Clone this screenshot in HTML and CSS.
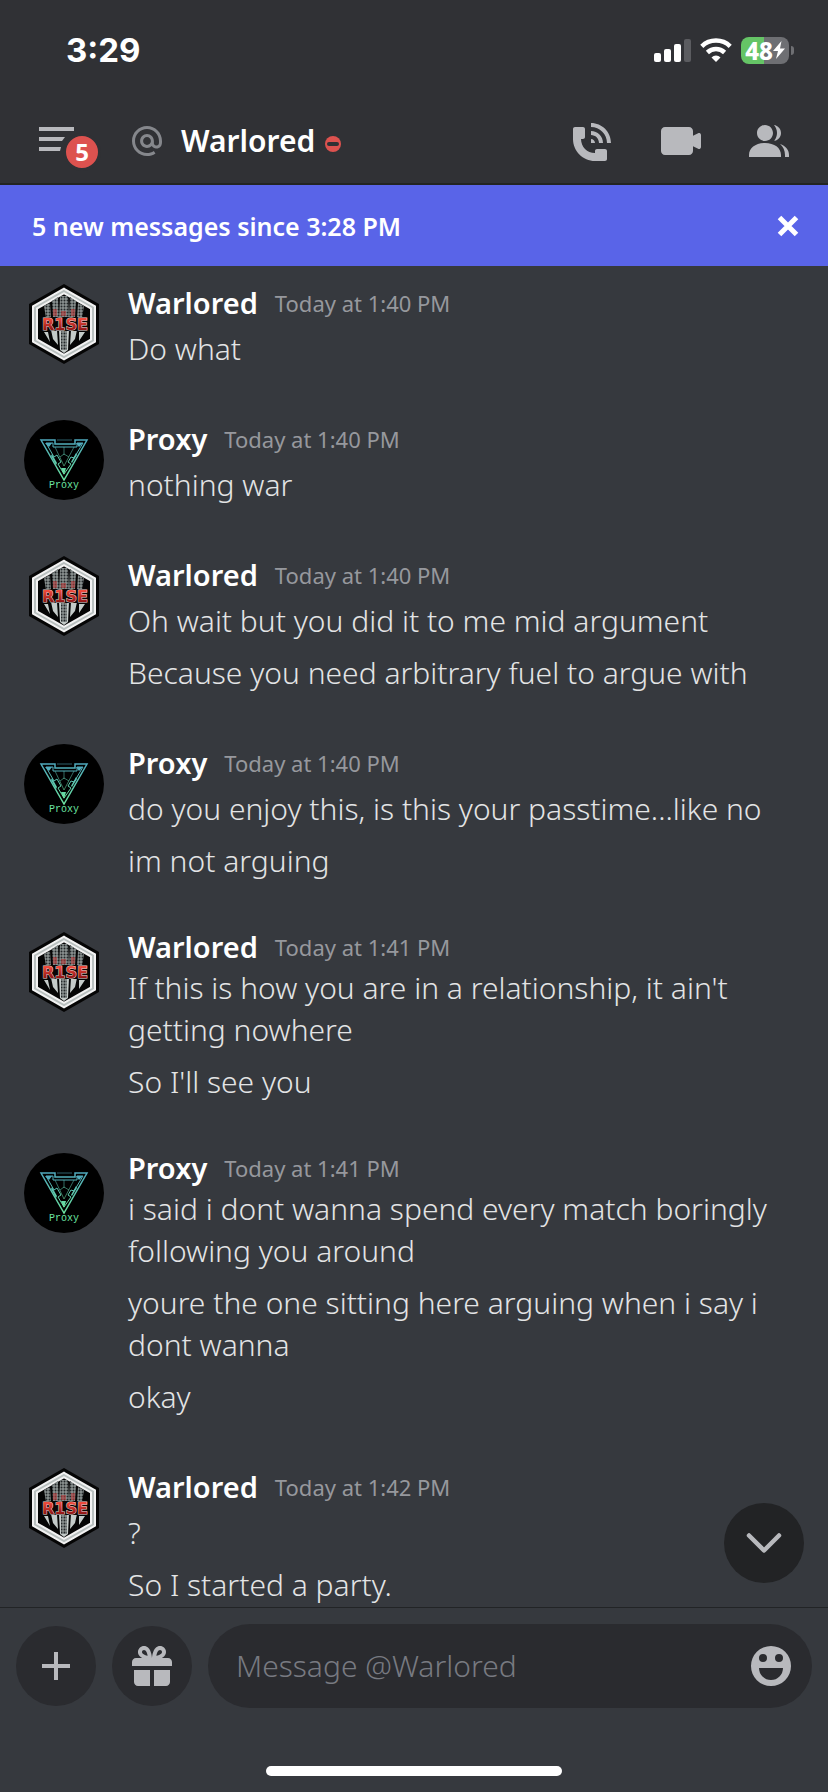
FILE: index.html
```html
<!DOCTYPE html>
<html lang="en">
<head>
<meta charset="utf-8">
<meta name="viewport" content="width=device-width, initial-scale=1">
<title>Warlored</title>
<link rel="stylesheet" href="styles.css">
</head>
<body>
<header class="top">
  <div class="statusbar">
    <time class="clock">3:29</time>
    <div class="indicators">
      <svg width="37" height="24" viewBox="0 0 37 24" fill="#fff" aria-hidden="true">
        <rect x="0" y="15" width="7" height="9" rx="2"/><rect x="10" y="11" width="7" height="13" rx="2"/><rect x="20" y="6" width="7" height="18" rx="2"/><rect x="30" y="1" width="7" height="23" rx="2" fill="#5b5c60"/>
      </svg>
      <svg width="32" height="24" viewBox="0 0 32 24" aria-hidden="true">
        <g fill="none" stroke="#fff" stroke-width="4.500"><path d="M1.800 8.300a20.500 20.500 0 0 1 28.400 0"/><path d="M7.400 14.500a12.500 12.500 0 0 1 17.200 0"/></g>
        <path d="M16 24 11.500 19.400a6.500 6.500 0 0 1 9 0Z" fill="#fff"/>
      </svg>
      <div class="battery"><span class="battery-body">48<svg width="12" height="18" viewBox="0 0 12 18" aria-hidden="true"><path d="M8.500 0 0 10h5L3 18 12 7.500H7Z" fill="#fff"/></svg></span><span class="battery-tip"></span></div>
    </div>
  </div>
  <nav class="nav">
    <button class="icon-btn menu" aria-label="Open menu, 5 unread">
      <svg width="40" height="32" viewBox="0 0 40 32" fill="#b8b9bd" aria-hidden="true"><path d="M3 2h35v4H3zM3 12h26l-3 4H3zM3 22h22l-1 4H3z"/></svg>
      <span class="badge">5</span>
    </button>
    <svg class="at" width="36" height="36" viewBox="0 0 24 24" fill="#85878c" aria-hidden="true"><path d="M12 2C6.486 2 2 6.486 2 12C2 17.515 6.486 22 12 22C14.039 22 15.993 21.398 17.652 20.259L16.521 18.611C15.195 19.519 13.633 20 12 20C7.589 20 4 16.411 4 12C4 7.589 7.589 4 12 4C16.411 4 20 7.589 20 12V12.782C20 14.17 19.402 15 18.4 15L18.398 15.018C18.338 15.005 18.273 15 18.209 15H18C17.437 15 16.6 14.182 16.6 13.631V12C16.6 9.464 14.537 7.4 12 7.4C9.463 7.4 7.4 9.463 7.4 12C7.4 14.537 9.463 16.6 12 16.6C13.234 16.6 14.35 16.106 15.177 15.313C15.826 16.269 16.93 17 18 17L18.002 16.981C18.064 16.994 18.129 17 18.195 17H18.4C20.552 17 22 15.306 22 12.782V12C22 6.486 17.514 2 12 2ZM12 14.599C10.566 14.599 9.4 13.433 9.4 11.999C9.4 10.565 10.566 9.399 12 9.399C13.434 9.399 14.6 10.565 14.6 11.999C14.6 13.433 13.434 14.599 12 14.599Z"/></svg>
    <h1 class="title">Warlored</h1>
    <svg class="dnd" width="16" height="16" viewBox="0 0 16 16" role="img" aria-label="Do not disturb"><circle cx="8" cy="8" r="8" fill="#dd524f"/><rect x="2" y="6" width="12" height="4" rx="2" fill="#303135"/></svg>
    <div class="actions">
      <button class="icon-btn" aria-label="Voice call"><svg width="48" height="48" viewBox="0 0 24 24" fill="currentColor"><path d="M11 5V3C16.515 3 21 7.486 21 13H19C19 8.589 15.411 5 11 5ZM17 13C17 9.691 14.309 7 11 7V9C13.206 9 15 10.794 15 13H17ZM11 11V13H13C13 11.896 12.105 11 11 11ZM14 16H18C18.553 16 19 16.447 19 17V21C19 21.553 18.553 22 18 22H13C6.925 22 2 17.075 2 11V6C2 5.447 2.447 5 3 5H7C7.553 5 8 5.447 8 6V10C8 10.553 7.553 11 7 11H6C6.063 14.938 9 18 13 18V17C13 16.447 13.447 16 14 16Z"/></svg></button>
      <button class="icon-btn" aria-label="Video call"><svg width="48" height="48" viewBox="0 0 24 24" fill="currentColor"><path d="M21.526 8.149C21.231 7.966 20.862 7.951 20.553 8.105L18 9.382V7C18 5.897 17.103 5 16 5H4C2.897 5 2 5.897 2 7V17C2 18.104 2.897 19 4 19H16C17.103 19 18 18.104 18 17V14.618L20.553 15.894C20.694 15.965 20.847 16 21 16C21.183 16 21.365 15.949 21.526 15.851C21.82 15.668 22 15.347 22 15V9C22 8.653 21.82 8.332 21.526 8.149Z"/></svg></button>
      <button class="icon-btn" aria-label="Members"><svg width="48" height="48" viewBox="0 0 24 24" fill="currentColor"><path d="M14 8C14 10.2 12.2 12 10 12C7.800 12 6 10.2 6 8C6 5.800 7.800 4 10 4C12.200 4 14 5.800 14 8ZM2 19C2 15.470 5.290 13 10 13C14.710 13 18 15.470 18 19V20H2V19Z"/><path d="M20 20H22V19C22 16.440 20.270 14.440 17.520 13.530C19.060 14.910 20 16.800 20 19V20ZM14.880 11.900C16.660 11.500 18 9.900 18 8C18 5.970 16.470 4.280 14.500 4.030C15.430 5.090 16 6.480 16 8C16 9.450 15.490 10.770 14.640 11.800Z"/></svg></button>
    </div>
  </nav>
</header>

<section class="banner">
  <p class="banner-text">5 new messages since 3:28 PM</p>
  <button class="icon-btn" aria-label="Mark as read"><svg width="22" height="22" viewBox="0 0 22 22" fill="none" stroke="#fff" stroke-width="5"><path d="M2.500 2.500l17 17M19.500 2.500l-17 17"/></svg></button>
</section>

<main class="chat">
  <ol class="messages">
    <li class="message">
      <svg class="avatar" viewBox="0 0 80 80">
        <defs>
          <linearGradient id="red" x1="0" y1="0" x2="0" y2="1">
            <stop offset="0.200" stop-color="#f04a3c"/>
            <stop offset="0.800" stop-color="#8e1414"/>
          </linearGradient>
          <pattern id="mesh" width="3" height="3" patternUnits="userSpaceOnUse">
            <rect width="3" height="3" fill="#8b9291"/>
            <circle cx="1.500" cy="1.500" r="1" fill="#23282a"/>
          </pattern>
        </defs>
        <g id="avatar-warlored">
          <path d="M40 0 75 20V60L40 80 5 60V20Z" fill="#050505"/>
          <path d="M40 7 69 23.500V56.500L40 73 11 56.500V23.500Z" fill="#050505" stroke="#f2f2f2" stroke-width="6"/>
          <path d="M40 7 69 23.500V56.500L40 73 11 56.500V23.500Z" fill="none" stroke="#b9c0bf" stroke-width="2"/>
          <path d="M20 22 26 19 27 34H22ZM28 17 34 13 35 34H29ZM36 12H44L45 34H35ZM46 13 52 17 51 34H45ZM54 19 60 22 58 34H53Z" fill="url(#mesh)"/>
          <path d="M29 25h4v7h-4zM37 27h5v5h-5zM47 25h4v7h-4z" fill="#b83a3a" opacity=".6"/>
          <path d="M20 48 26 58 24 48ZM27 46H33L34 61 29 55ZM35 46H45L44 66 40 69 36 66ZM47 46H53L51 55 46 61ZM55 48 61 48 55 57Z" fill="#c4cbc9"/>
          <path d="M37 47h6v19h-6z" fill="url(#mesh)"/>
          <path d="M17 33h47v14H17z" fill="#0a0606"/>
          <text class="logo-rise" x="41" y="46" text-anchor="middle">R1SE</text>
        </g>
      </svg>
      <div class="content"><div class="meta"><h2 class="author">Warlored</h2><time class="time">Today at 1:40 PM</time></div><p class="text">Do what</p></div>
    </li>
    <li class="message">
      <svg class="avatar" viewBox="0 0 80 80">
        <defs>
          <linearGradient id="teal" x1="0" y1="0" x2="0" y2="1">
            <stop offset="0" stop-color="#4fa9bd"/>
            <stop offset="1" stop-color="#6be3a0"/>
          </linearGradient>
        </defs>
        <g id="avatar-proxy">
          <circle cx="40" cy="40" r="40" fill="#000"/>
          <g fill="none" stroke="url(#teal)">
            <path d="M17 20H31V24H51V20H63L40 60Z" stroke-width="1.500"/>
            <path d="M22 23H29V27H53V23H59L50 38 47 37 44 42 47 44 40 54 34 44 37 42 33 35 30 37Z" stroke-width="1"/>
            <path d="M31 27 40 46 50 27M40 27V35M36 37 40 34 45 37M33 20H48" stroke-width=".8" opacity=".7"/>
          </g>
          <path d="M21 23 28 23 25 27ZM59 23 52 23 55 27ZM28 34 33 43 32 45 27 36ZM52 33 47 42 48 43 53 35ZM37 48H42L40 55Z" fill="url(#teal)"/>
          <text class="logo-proxy" x="40" y="68" text-anchor="middle">Proxy</text>
        </g>
      </svg>
      <div class="content"><div class="meta"><h2 class="author">Proxy</h2><time class="time">Today at 1:40 PM</time></div><p class="text">nothing war</p></div>
    </li>
    <li class="message">
      <svg class="avatar" viewBox="0 0 80 80"><use href="#avatar-warlored"/></svg>
      <div class="content"><div class="meta"><h2 class="author">Warlored</h2><time class="time">Today at 1:40 PM</time></div><p class="text">Oh wait but you did it to me mid argument</p><p class="text">Because you need arbitrary fuel to argue with</p></div>
    </li>
    <li class="message">
      <svg class="avatar" viewBox="0 0 80 80"><use href="#avatar-proxy"/></svg>
      <div class="content"><div class="meta"><h2 class="author">Proxy</h2><time class="time">Today at 1:40 PM</time></div><p class="text">do you enjoy this, is this your passtime...like no</p><p class="text">im not arguing</p></div>
    </li>
    <li class="message tight">
      <svg class="avatar" viewBox="0 0 80 80"><use href="#avatar-warlored"/></svg>
      <div class="content"><div class="meta"><h2 class="author">Warlored</h2><time class="time">Today at 1:41 PM</time></div><p class="text">If this is how you are in a relationship, it ain't<br>getting nowhere</p><p class="text">So I'll see you</p></div>
    </li>
    <li class="message tight">
      <svg class="avatar" viewBox="0 0 80 80"><use href="#avatar-proxy"/></svg>
      <div class="content"><div class="meta"><h2 class="author">Proxy</h2><time class="time">Today at 1:41 PM</time></div><p class="text">i said i dont wanna spend every match boringly<br>following you around</p><p class="text">youre the one sitting here arguing when i say i<br>dont wanna</p><p class="text">okay</p></div>
    </li>
    <li class="message">
      <svg class="avatar" viewBox="0 0 80 80"><use href="#avatar-warlored"/></svg>
      <div class="content"><div class="meta"><h2 class="author">Warlored</h2><time class="time">Today at 1:42 PM</time></div><p class="text">?</p><p class="text">So I started a party.</p></div>
    </li>
  </ol>
  <button class="jump" aria-label="Jump to latest"><svg width="40" height="24" viewBox="0 0 40 24" fill="none" stroke="currentColor" stroke-width="4.500" stroke-linecap="round" stroke-linejoin="round"><path d="M5 4.500 20 19.500 35 4.500"/></svg></button>
</main>

<footer class="footer">
  <form class="composer">
    <button type="button" class="round-btn" aria-label="Add attachment"><svg width="28" height="28" viewBox="0 0 28 28" fill="currentColor"><path d="M12 0h4v12h12v4H16v12h-4V16H0v-4h12z"/></svg></button>
    <button type="button" class="round-btn" aria-label="Send a gift"><svg width="48" height="48" viewBox="0 0 24 24" fill="currentColor" fill-rule="evenodd"><path d="M16.886 8H20C21.104 8 22 8.896 22 10V12H2V10C2 8.896 2.897 8 4 8H7.114C6.663 7.764 6.236 7.477 5.879 7.121C4.709 5.951 4.709 4.048 5.879 2.879C7.012 1.746 8.986 1.746 10.121 2.877C11.758 4.514 11.979 7.595 11.998 7.941L12 8L12.002 7.940C12.022 7.595 12.242 4.515 13.879 2.878C15.014 1.745 16.986 1.746 18.121 2.877C19.290 4.049 19.290 5.952 18.121 7.121C17.764 7.477 17.337 7.764 16.886 8ZM7.293 5.707C6.903 5.316 6.903 4.682 7.293 4.292C7.481 4.103 7.732 4 8 4C8.268 4 8.519 4.103 8.707 4.292C9.297 4.882 9.641 5.940 9.825 6.822C8.945 6.639 7.879 6.293 7.293 5.707ZM14.174 6.824C14.359 5.941 14.702 4.883 15.293 4.293C15.481 4.103 15.732 4 16 4C16.268 4 16.519 4.103 16.706 4.291C17.096 4.682 17.097 5.316 16.707 5.707C16.116 6.298 15.057 6.642 14.174 6.824ZM3 14V20C3 21.102 3.897 22 5 22H11V14H3ZM13 14V22H19C20.104 22 21 21.102 21 20V14H13Z"/></svg></button>
    <div class="field">
      <input class="input" type="text" placeholder="Message @Warlored" aria-label="Message @Warlored">
      <button type="button" class="icon-btn" aria-label="Emoji"><svg width="48" height="48" viewBox="0 0 24 24" fill="currentColor" fill-rule="evenodd"><path d="M12 2a10 10 0 1 0 0 20a10 10 0 1 0 0-20ZM8 6a2 2 0 1 1 0 4a2 2 0 1 1 0-4ZM16 6a2 2 0 1 1 0 4a2 2 0 1 1 0-4ZM6 13H18A6 6 0 0 1 6 13Z"/></svg></button>
    </div>
  </form>
  <div class="home-bar"></div>
</footer>
</body>
</html>
```
FILE: styles.css
```css
* {
  box-sizing: border-box;
  margin: 0;
  padding: 0;
}

body {
  display: flex;
  flex-direction: column;
  height: 100vh;
  background: #36393e;
  color: #e3e4e5;
  font-family: "Noto Sans", "Open Sans", sans-serif;
}

svg {
  display: block;
  flex: none;
}

button {
  border: 0;
  background: none;
  color: #b8b9bd;
  font: inherit;
}

.logo-rise {
  fill: url(#red);
  stroke: #e9d6d4;
  stroke-width: 1px;
  paint-order: stroke;
  font: 700 16px "DejaVu Sans", sans-serif;
}

.logo-proxy {
  fill: #6be3a0;
  font: 400 10px "Liberation Mono", monospace;
}

.top {
  flex: none;
  border-bottom: 2px solid #222422;
  background: #303135;
}

.statusbar {
  display: flex;
  align-items: center;
  justify-content: space-between;
  height: 98px;
  padding: 2px 34px 0 66px;
}

.clock {
  color: #fff;
  font: 700 33px/40px Inter, sans-serif;
}

.indicators {
  display: flex;
  align-items: center;
  gap: 9px;
}

.battery {
  display: flex;
  align-items: center;
  gap: 2px;
}

.battery-body {
  display: flex;
  align-items: center;
  justify-content: center;
  width: 48px;
  height: 27px;
  border-radius: 8px;
  background: linear-gradient(to right, #65c466 48%, #6e6f73 48%);
  color: #fff;
  font: 800 24px/27px "Noto Sans", sans-serif;
}

.battery-tip {
  width: 3px;
  height: 9px;
  border-radius: 0 4px 4px 0;
  background: #6e6f73;
}

.nav {
  display: flex;
  align-items: center;
  height: 85px;
  padding: 0 35px 0 36px;
}

.icon-btn {
  display: flex;
  flex: none;
}

.menu {
  position: relative;
  width: 64px;
  margin-right: 29px;
}

.badge {
  position: absolute;
  top: 8px;
  left: 27px;
  width: 38px;
  height: 38px;
  border: 3px solid #303135;
  border-radius: 50%;
  background: #dd524f;
  color: #fff;
  font-size: 24px;
  font-weight: 700;
  line-height: 32px;
}

.title {
  margin: 0 10px 0 16px;
  color: #fff;
  font-size: 30px;
  font-weight: 600;
  line-height: 40px;
}

.dnd {
  margin-top: 6px;
}

.actions {
  display: flex;
  gap: 40px;
  margin-left: auto;
}

.banner {
  display: flex;
  flex: none;
  align-items: center;
  justify-content: space-between;
  height: 81px;
  padding: 0 29px 0 32px;
  background: #5964e8;
}

.banner-text {
  color: #fff;
  font-size: 25px;
  font-weight: 600;
  line-height: 36px;
}

.chat {
  position: relative;
  flex: 1;
  min-height: 0;
}

.messages {
  display: flex;
  flex-direction: column;
  gap: 50px;
  height: 100%;
  padding: 18px 24px 0;
  overflow: hidden;
  list-style: none;
}

.message {
  display: flex;
  flex: none;
  gap: 24px;
}

.avatar {
  width: 80px;
  height: 80px;
}

.content {
  display: flex;
  flex: 1;
  flex-direction: column;
  gap: 10px;
}

.meta {
  display: flex;
  align-items: center;
  gap: 17px;
  height: 38px;
  margin-bottom: -4px;
  line-height: 38px;
}

.tight .meta {
  margin-top: -4px;
  margin-bottom: -9px;
}

.author {
  color: #fff;
  font-size: 29px;
  font-weight: 600;
}

.time {
  color: #96989d;
  font-size: 22px;
}

.text {
  font-size: 30px;
  font-weight: 300;
  line-height: 42px;
}

.jump {
  position: absolute;
  right: 24px;
  bottom: 24px;
  display: grid;
  place-items: center;
  width: 80px;
  height: 80px;
  border-radius: 50%;
  background: #222325;
}

.footer {
  flex: none;
  border-top: 1px solid #222426;
}

.composer {
  display: flex;
  align-items: center;
  gap: 16px;
  padding: 16px;
}

.round-btn {
  display: grid;
  flex: none;
  place-items: center;
  width: 80px;
  height: 80px;
  border-radius: 50%;
  background: #2a2b2f;
}

.field {
  display: flex;
  flex: 1;
  align-items: center;
  height: 84px;
  padding: 0 17px 0 28px;
  border-radius: 42px;
  background: #2a2b2f;
}

.input {
  flex: 1;
  min-width: 0;
  border: 0;
  outline: 0;
  background: none;
  color: #e3e4e5;
  font: 300 30px/42px "Noto Sans", "Open Sans", sans-serif;
}

.input::placeholder {
  color: #787a81;
}

.home-bar {
  width: 296px;
  height: 10px;
  margin: 42px auto 16px;
  border-radius: 5px;
  background: #fff;
}
```
